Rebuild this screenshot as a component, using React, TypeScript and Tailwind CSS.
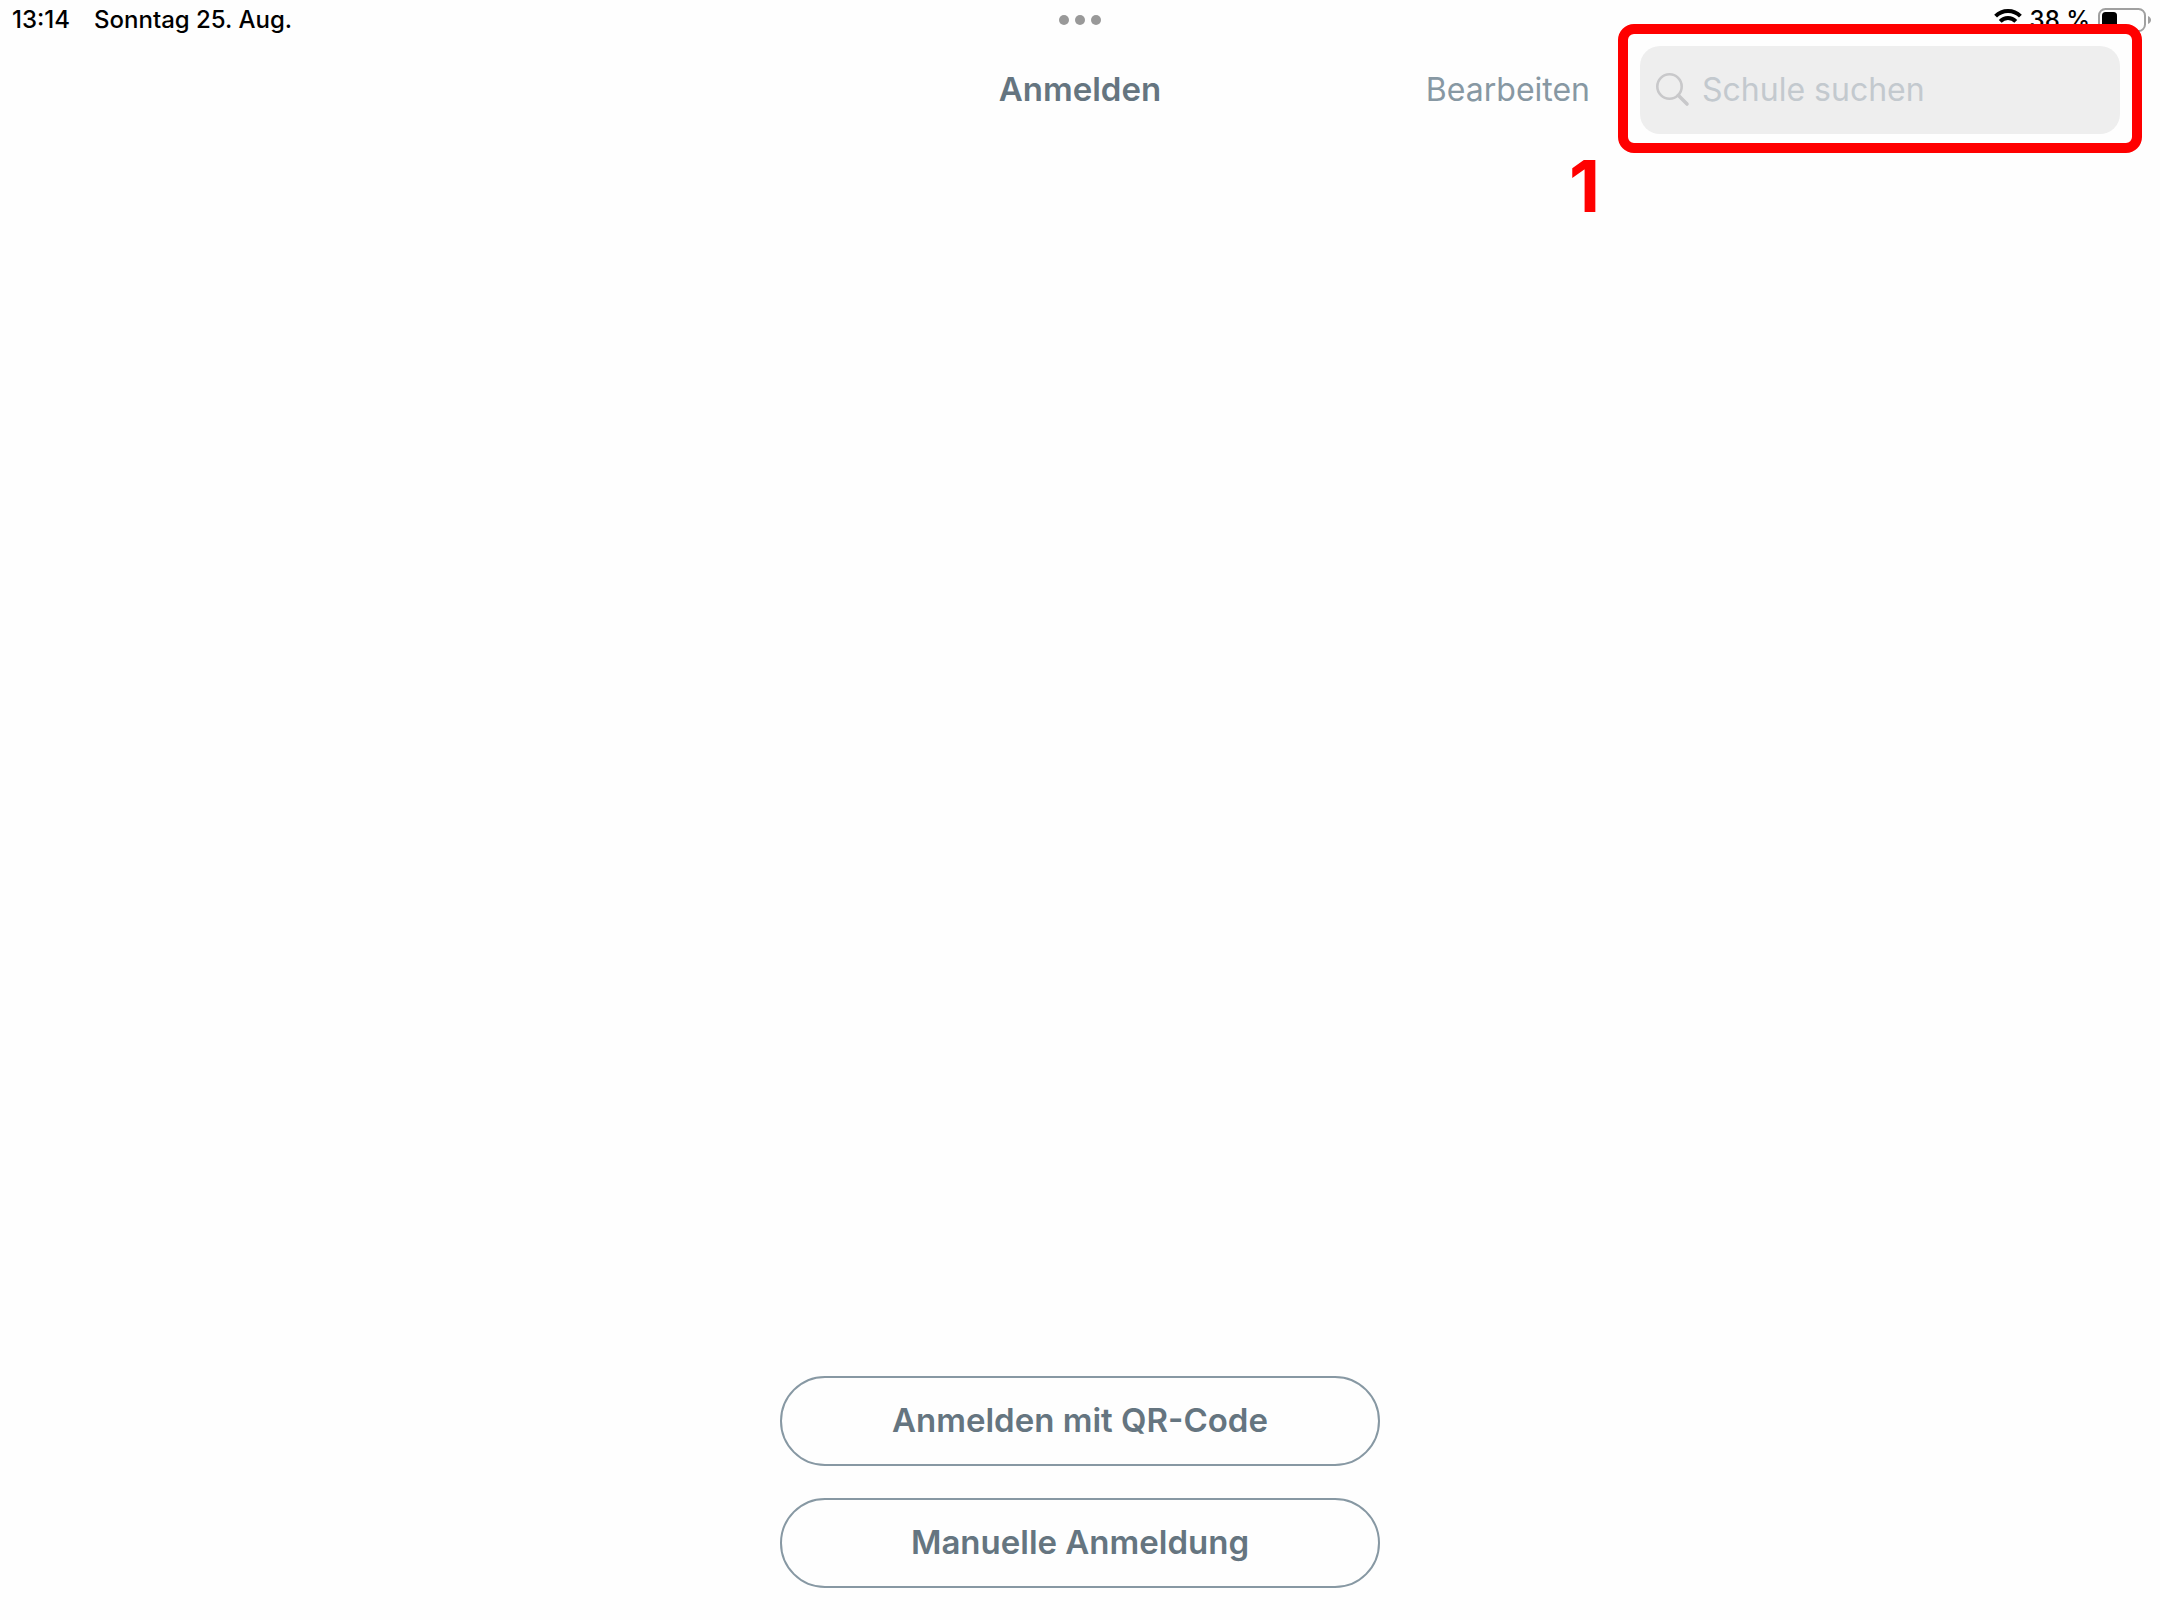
import React, { useState } from 'react';

const WifiIcon: React.FC<{ className?: string }> = ({ className }) => (
  <svg className={className} viewBox="0 0 28 22" fill="none" stroke="currentColor" strokeWidth="4" aria-hidden="true">
    <path d="M1.6 7.2C8.4 .4 19.6 .4 26.4 7.2" />
    <path d="M6.2 12.4C10.6 8 17.4 8 21.8 12.4" />
    <path d="M14 21l-4-4.4c2.2-2 5.8-2 8 0z" fill="currentColor" stroke="none" />
  </svg>
);

const BatteryIcon: React.FC<{ className?: string }> = ({ className }) => (
  <svg className={className} viewBox="0 0 54 24" aria-hidden="true">
    <rect x="1" y="1" width="46" height="22" rx="6.5" fill="none" stroke="#a0a0a0" strokeWidth="2" />
    <rect x="4" y="4" width="15" height="16" rx="3.5" fill="#000" />
    <path d="M50 8c4 1.500 4 6.500 0 8z" fill="#a0a0a0" />
  </svg>
);

const SearchIcon: React.FC<{ className?: string }> = ({ className }) => (
  <svg className={className} viewBox="0 0 34 34" fill="none" stroke="currentColor" aria-hidden="true">
    <circle cx="13.500" cy="13.500" r="12.200" strokeWidth="2.600" />
    <path d="M22.500 22.500L31 31" strokeWidth="3.600" strokeLinecap="round" />
  </svg>
);

const StatusBar: React.FC = () => (
  <div className="grid h-10 grid-cols-[1fr_auto_1fr] items-center px-2 text-2xl font-medium text-black">
    <div className="flex gap-6 pl-1">
      <span>13:14</span>
      <span>Sonntag 25. Aug.</span>
    </div>
    <div className="flex gap-1.5">
      <span className="size-2.5 rounded-full bg-[#999999]" />
      <span className="size-2.5 rounded-full bg-[#999999]" />
      <span className="size-2.5 rounded-full bg-[#999999]" />
    </div>
    <div className="flex items-center justify-end gap-2">
      <WifiIcon className="h-[22px] w-7" />
      <span>38 %</span>
      <BatteryIcon className="h-6 w-[54px]" />
    </div>
  </div>
);

interface SearchFieldProps {
  value: string;
  onChange: (value: string) => void;
}

const SearchField: React.FC<SearchFieldProps> = ({ value, onChange }) => (
  <div className="relative w-[480px]">
    <label className="flex h-[88px] items-center gap-3 rounded-[20px] bg-[#eeeeee] px-4">
      <SearchIcon className="size-[34px] shrink-0 text-[#c8c8ca]" />
      <input
        type="text"
        value={value}
        onChange={(e) => onChange(e.target.value)}
        placeholder="Schule suchen"
        aria-label="Schule suchen"
        className="w-full min-w-0 bg-transparent text-[32px] text-[#657580] outline-none placeholder:text-[#c3c9ce]"
      />
    </label>
    {/* highlight frame and step number */}
    <div className="pointer-events-none absolute -inset-x-[22px] -top-[22px] -bottom-[19px] rounded-2xl border-[10px] border-[#ff0000]" />
    <span className="pointer-events-none absolute right-full top-full mr-10 mt-4 text-7xl font-bold text-[#ff0000]">
      1
    </span>
  </div>
);

export default function App() {
  const [query, setQuery] = useState('');

  return (
    <div className="flex min-h-screen flex-col bg-[#fefefe] font-['Inter',sans-serif]">
      <StatusBar />
      <header className="grid grid-cols-[1fr_auto_1fr] items-center px-10 pt-1.5">
        <h1 className="col-start-2 text-[33px] font-semibold text-[#657580]">Anmelden</h1>
        <div className="flex items-center justify-end gap-[50px]">
          <button type="button" className="text-[32px] text-[#8798a3]">Bearbeiten</button>
          <SearchField value={query} onChange={setQuery} />
        </div>
      </header>
      <main className="flex flex-1 flex-col items-center justify-end gap-8 pb-8">
        <button type="button" className="h-[90px] w-[600px] rounded-full border-2 border-[#8798a3] text-[33px] font-semibold text-[#657580]">
          Anmelden mit QR-Code
        </button>
        <button type="button" className="h-[90px] w-[600px] rounded-full border-2 border-[#8798a3] text-[33px] font-semibold text-[#657580]">
          Manuelle Anmeldung
        </button>
      </main>
    </div>
  );
}
